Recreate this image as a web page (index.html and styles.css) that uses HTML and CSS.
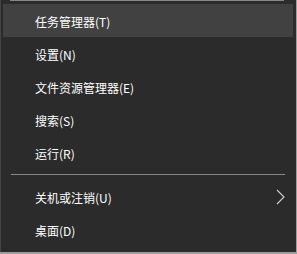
FILE: index.html
```html
<!DOCTYPE html>
<html lang="zh-CN">
<head>
<meta charset="utf-8">
<link rel="stylesheet" href="styles.css">
</head>
<body>
<div class="menu">
  <div class="sep sep-top"></div>
  <div class="item active">任务管理器(T)</div>
  <div class="item">设置(N)</div>
  <div class="item">文件资源管理器(E)</div>
  <div class="item">搜索(S)</div>
  <div class="item">运行(R)</div>
  <div class="sep sep-mid"></div>
  <div class="item sub"><span>关机或注销(U)</span>
    <svg class="chev" width="9" height="16" viewBox="0 0 9 16"><polyline points="1,1 8,8 1,15" fill="none" stroke="#d0d0d0" stroke-width="1.1"/></svg>
  </div>
  <div class="item">桌面(D)</div>
</div>
</body>
</html>
```
FILE: styles.css
```css
html, body {
  margin: 0;
  padding: 0;
}
body {
  background: #9d9d9d;
  width: 297px;
  height: 254px;
  overflow: hidden;
}
.menu {
  box-sizing: border-box;
  width: 296px;
  height: 252px;
  background: #2b2b2b;
  border-left: 1px solid #444444;
  border-right: 1px solid #2b2b2b;
  border-bottom: 1px solid #2b2b2b;
  padding: 0 2px;
  display: flex;
  flex-direction: column;
  font-family: "Noto Sans CJK SC", "Noto Sans", sans-serif;
  font-size: 12px;
  color: #ffffff;
}
.sep {
  height: 1px;
  background: #878787;
  flex: none;
}
.sep-top {
  margin: 0 9px 3px 7px;
}
.sep-mid {
  margin: 5px 8px 5px 8px;
}
.item {
  flex: none;
  height: 33px;
  box-sizing: border-box;
  padding: 2px 8px 0 32px;
  display: flex;
  align-items: center;
  justify-content: space-between;
}
.active {
  background: #414141;
}
.chev {
  display: block;
  margin-top: -2px;
}
```
